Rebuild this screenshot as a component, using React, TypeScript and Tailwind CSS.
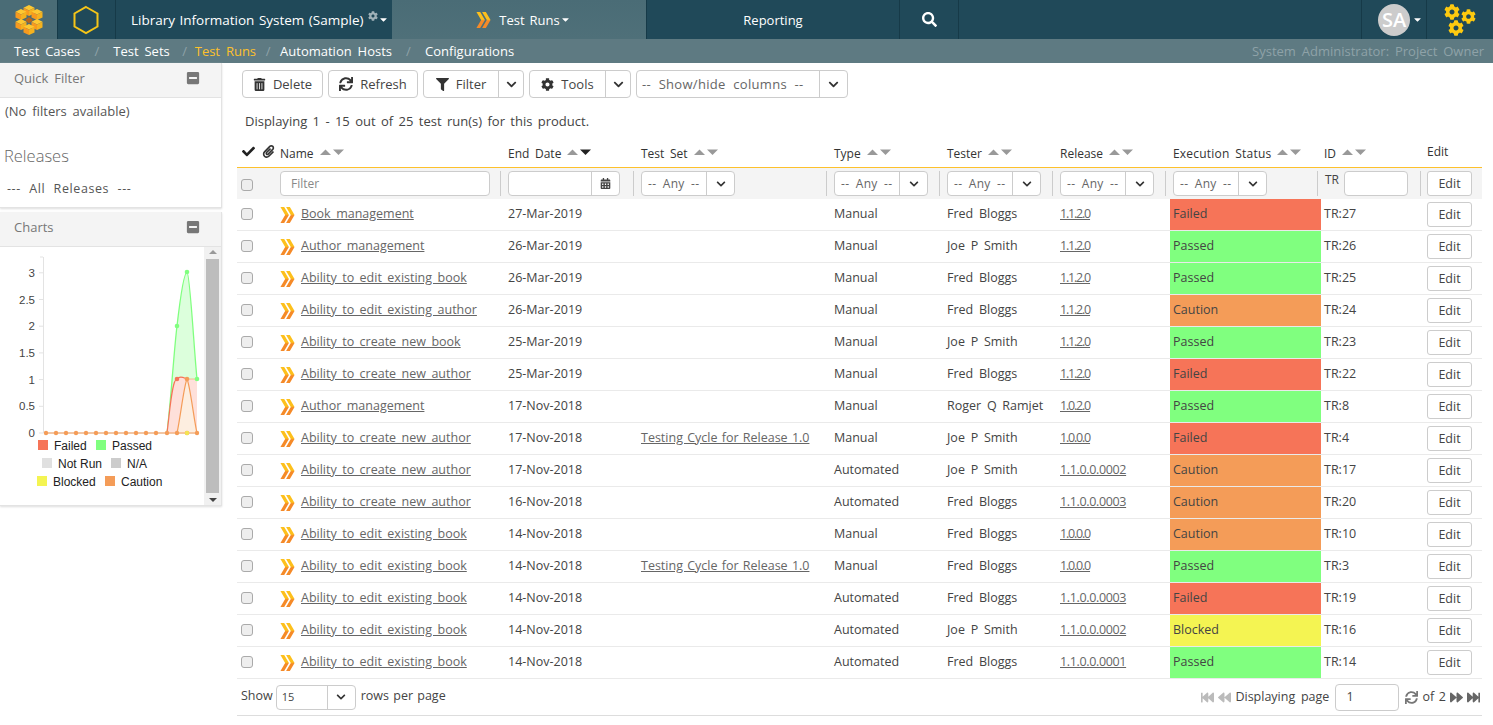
import React from "react";
import { FaTrashAlt, FaSync, FaFilter, FaCog, FaCalendarAlt, FaCheck, FaPaperclip, FaSearch, FaChevronDown, FaFastBackward, FaBackward, FaForward, FaFastForward, FaCaretDown, FaMinusSquare } from "react-icons/fa";

const GRID = "grid grid-cols-[43px_228px_133px_193px_113px_113px_110px_151px_103px_58px]";
const STATUS: Record<string, string> = {
  Failed: "bg-[#f67458]",
  Passed: "bg-[#80ff7f]",
  Caution: "bg-[#f49c58]",
  Blocked: "bg-[#f4f452]",
};
const rows = [
  ["Book management", "27-Mar-2019", "", "Manual", "Fred Bloggs", "1.1.2.0", "Failed", "TR:27"],
  ["Author management", "26-Mar-2019", "", "Manual", "Joe P Smith", "1.1.2.0", "Passed", "TR:26"],
  ["Ability to edit existing book", "26-Mar-2019", "", "Manual", "Fred Bloggs", "1.1.2.0", "Passed", "TR:25"],
  ["Ability to edit existing author", "26-Mar-2019", "", "Manual", "Fred Bloggs", "1.1.2.0", "Caution", "TR:24"],
  ["Ability to create new book", "25-Mar-2019", "", "Manual", "Joe P Smith", "1.1.2.0", "Passed", "TR:23"],
  ["Ability to create new author", "25-Mar-2019", "", "Manual", "Fred Bloggs", "1.1.2.0", "Failed", "TR:22"],
  ["Author management", "17-Nov-2018", "", "Manual", "Roger Q Ramjet", "1.0.2.0", "Passed", "TR:8"],
  ["Ability to create new author", "17-Nov-2018", "Testing Cycle for Release 1.0", "Manual", "Joe P Smith", "1.0.0.0", "Failed", "TR:4"],
  ["Ability to create new author", "17-Nov-2018", "", "Automated", "Joe P Smith", "1.1.0.0.0002", "Caution", "TR:17"],
  ["Ability to create new author", "16-Nov-2018", "", "Automated", "Fred Bloggs", "1.1.0.0.0003", "Caution", "TR:20"],
  ["Ability to edit existing book", "14-Nov-2018", "", "Manual", "Fred Bloggs", "1.0.0.0", "Caution", "TR:10"],
  ["Ability to edit existing book", "14-Nov-2018", "Testing Cycle for Release 1.0", "Manual", "Fred Bloggs", "1.0.0.0", "Passed", "TR:3"],
  ["Ability to edit existing book", "14-Nov-2018", "", "Automated", "Fred Bloggs", "1.1.0.0.0003", "Failed", "TR:19"],
  ["Ability to edit existing book", "14-Nov-2018", "", "Automated", "Joe P Smith", "1.1.0.0.0002", "Blocked", "TR:16"],
  ["Ability to edit existing book", "14-Nov-2018", "", "Automated", "Fred Bloggs", "1.1.0.0.0001", "Passed", "TR:14"],
];

function Sort({ active }: { active?: boolean }) {
  return (
    <svg width="26" height="8" viewBox="0 0 26 8" className="ml-[5px] inline-block align-[2px]">
      <path d="M1 7 L6.5 1.5 L12 7 Z" fill="#999" />
      <path d="M14 1.5 L25 1.5 L19.5 7 Z" fill={active ? "#222" : "#999"} />
    </svg>
  );
}
function Chevrons() {
  return (
    <svg width="15" height="16" viewBox="0 0 15 17" className="shrink-0">
      <defs>
        <linearGradient id="cg" x1="0" y1="0" x2="0" y2="1">
          <stop offset="0.45" stopColor="#fdc01c" />
          <stop offset="0.55" stopColor="#f58a28" />
        </linearGradient>
      </defs>
      <path d="M0 0 H4 L9 8.5 L4 17 H0 L5 8.5 Z" fill="url(#cg)" />
      <path d="M6 0 H10 L15 8.5 L10 17 H6 L11 8.5 Z" fill="url(#cg)" />
    </svg>
  );
}
function Check() {
  return <span className="block h-[12px] w-[12px] rounded-[3px] border border-[#aaa] bg-[#eee]" />;
}
function Btn({ icon, label, caret, w }: { icon?: React.ReactNode; label: string; caret?: boolean; w: string }) {
  return (
    <div className={`flex h-[28px] items-center rounded-[4px] border border-[#ccc] bg-white text-[13px] text-[#444] ${w}`}>
      <span className="flex flex-1 items-center justify-center gap-[7px]">{icon}{label}</span>
      {caret && (
        <span className="flex h-full w-[25px] items-center justify-center border-l border-[#ccc]">
          <FaChevronDown size={11} className="text-[#333]" />
        </span>
      )}
    </div>
  );
}
function Sep() {
  return <span className="ml-auto mr-[7px] h-[25px] w-px shrink-0 bg-[#ccc]" />;
}
function AnySel() {
  return (
    <div className="flex h-[25px] w-[94px] shrink-0 items-center rounded-[4px] border border-[#ccc] bg-white text-[#666]">
      <span className="flex-1 pl-[6px] text-[12px] tracking-[0.3px] [word-spacing:3px]">-- Any --</span>
      <span className="flex h-full w-[28px] items-center justify-center border-l border-[#ccc]">
        <FaChevronDown size={10} className="text-[#333]" />
      </span>
    </div>
  );
}
function Panel({ title, children, className = "" }: { title: string; children?: React.ReactNode; className?: string }) {
  return (
    <div className={className}>
      <div className="flex h-[35px] items-center justify-between border-b border-[#e3e3e3] bg-[#f4f4f4] pb-[4px] pl-[14px] pr-[21px] text-[13px] text-[#777]">
        <span>{title}</span>
        <FaMinusSquare size={14} className="text-[#777]" />
      </div>
      {children}
    </div>
  );
}
function Chart() {
  const X = [46, 56, 66, 76, 86, 96, 106, 116, 126, 136, 146, 156, 167, 177, 187, 197];
  const Y = (v: number) => 433 - v * 53.4;
  const yt = ["0", "0.5", "1", "1.5", "2", "2.5", "3"];
  const leg: [string, number, number, string][] = [
    ["Failed", 38, 440, "#f67458"], ["Passed", 96, 440, "#80ff7f"],
    ["Not Run", 42, 458, "#e0e0e0"], ["N/A", 111, 458, "#cccccc"],
    ["Blocked", 37, 476, "#f4f452"], ["Caution", 105, 476, "#f49c58"],
  ];
  return (
    <svg width="204" height="258" viewBox="0 247 204 258" className="block font-['Liberation_Sans',sans-serif] [word-spacing:0]">
      <path d={`M43.5 257 V433 H197`} fill="none" stroke="#e3e3e3" />
      <path d="M40 257 H43" stroke="#e3e3e3" />
      {yt.map((t, i) => (
        <g key={t}>
          <path d={`M39 ${Y(i / 2)} H43`} stroke="#e3e3e3" />
          <text x="35" y={Y(i / 2) + 4} textAnchor="end" fontSize="11.5" fill="#444">{t}</text>
        </g>
      ))}
      <path d="M167 433 C171 400 174 350 177 326 C180 300 184 273 187 272 C190 273 194 350 197 379 V433 Z" fill="#dcffdc" />
      <path d="M167 433 C171 400 174 350 177 326 C180 300 184 273 187 272 C190 273 194 350 197 379" fill="none" stroke="#80ff7f" strokeWidth="1.3" />
      <path d="M167 433 C170 410 172 379 177 379 C180 375 184 378 187 379 H197 V433 Z" fill="#fee0da" />
      <path d="M167 433 C170 410 172 379 177 379 C180 375 184 378 187 379" fill="none" stroke="#f67458" strokeWidth="1.2" />
      <path d="M177 433 C180 420 184 385 187 379 C190 385 194 420 197 433 Z" fill="#fdeee0" />
      <path d="M177 433 C180 420 184 385 187 379 C190 385 194 420 197 433" fill="none" stroke="#f49c58" strokeWidth="1.2" />
      <path d="M187 379 H197" stroke="#f49c58" strokeOpacity="0.6" />
      <path d="M46 433 H197" stroke="#f49c58" strokeWidth="1.2" />
      {X.map((x) => <circle key={x} cx={x} cy={433} r="2.2" fill="#f49c58" />)}
      <circle cx="187" cy="433" r="2.2" fill="#f4e452" />
      <circle cx="177" cy={326} r="2.3" fill="#80ff7f" />
      <circle cx="187" cy={272} r="2.3" fill="#80ff7f" />
      <circle cx="197" cy={379} r="2.3" fill="#80ff7f" />
      <circle cx="177" cy={379} r="2.3" fill="#f67458" />
      <circle cx="187" cy={379} r="2.3" fill="#f49c58" />
      {leg.map(([t, x, y, c]) => (
        <g key={t}>
          <rect x={x} y={y} width="10" height="10" fill={c} />
          <text x={x + 16} y={y + 10} fontSize="12" fill="#222">{t}</text>
        </g>
      ))}
    </svg>
  );
}
function Logo() {
  const cube = (x: number, y: number, k: number) => (
    <g key={k} transform={`translate(${x} ${y})`}>
      <path d="M0 -5 L5.5 -2.2 L0 0.6 L-5.5 -2.2 Z" fill="#fdc832" />
      <path d="M-5.5 -2.2 L0 0.6 V6 L-5.5 3.4 Z" fill="#f79a1f" />
      <path d="M5.5 -2.2 L0 0.6 V6 L5.5 3.4 Z" fill="#f5b21e" />
    </g>
  );
  return (
    <svg width="30" height="36" viewBox="0 0 30 36">
      {[[15, 8], [7, 12], [23, 12], [7, 22], [23, 22], [15, 27]].map(([x, y], i) => cube(x, y, i))}
      <path d="M15 15 L19 18 L15 21.5 L11 18 Z" fill="#b5651d" />
    </svg>
  );
}
export default function App() {
  return (
    <div className="flex h-[725px] w-[1493px] flex-col overflow-hidden bg-white font-['Open_Sans',sans-serif] text-[12.5px] leading-[18px] text-[#444] [word-spacing:2.5px]">
      <header className="flex h-[39px] shrink-0 items-stretch bg-[#204959] text-[13px] text-white">
        <div className="flex w-[58px] items-center justify-center border-r border-[#163a48] bg-[#4a6c76]"><Logo /></div>
        <div className="flex w-[58px] items-center justify-center border-r border-[#163a48] pr-[2px]">
          <svg width="26" height="30" viewBox="0 0 26 30"><path d="M13 2 L24.5 8.5 V21.5 L13 28 L1.5 21.5 V8.5 Z" fill="none" stroke="#f5c518" strokeWidth="2" /></svg>
        </div>
        <div className="flex w-[276px] items-center whitespace-nowrap pl-[15px] text-[13.5px] [word-spacing:1px]">
          Library Information System (Sample)
          <FaCog size={10} className="mb-[8px] ml-[4px] text-[#9fb1b8]" />
          <FaCaretDown size={11} className="text-white" />
        </div>
        <div className="flex w-[255px] items-center justify-center gap-[8px] border-r border-[#163a48] bg-gradient-to-b from-[#4a6c76] to-[#4f7079] pl-[9px] [word-spacing:1.5px]">
          <Chevrons />
          <span className="flex items-center">Test Runs<FaCaretDown size={11} /></span>
        </div>
        <div className="flex w-[253px] items-center justify-center border-r border-[#163a48]">Reporting</div>
        <div className="flex w-[59px] items-center justify-center border-r border-[#163a48]"><FaSearch size={15} /></div>
        <div className="flex-1" />
        <div className="flex w-[66px] items-center border-x border-[#163a48] pl-[16px]">
          <span className="flex h-[32px] w-[32px] shrink-0 items-center justify-center rounded-full bg-[#cccccc] text-[20px] font-semibold">SA</span>
          <FaCaretDown size={11} className="ml-[2px] shrink-0" />
        </div>
        <div className="flex w-[66px] items-center justify-center">
          <svg width="34" height="34" viewBox="0 0 34 34" className="text-[#fdc90f]">
            <FaCog x="1" y="1" size={16} />
            <FaCog x="18" y="6" size={15} />
            <FaCog x="5" y="17" size={16} />
          </svg>
        </div>
      </header>
      <nav className="flex h-[24px] shrink-0 items-center bg-[#5e7a82] pl-[14px] pr-[9px] text-[13px] text-[#fff]">
        <span>Test Cases</span><span className="w-[33px] text-center text-[#8ea2a8]">/</span>
        <span>Test Sets</span><span className="w-[25px] pl-[5px] text-center text-[#8ea2a8]">/</span>
        <span className="text-[#fdc12c]">Test Runs</span><span className="w-[24px] text-center text-[#8ea2a8]">/</span>
        <span>Automation Hosts</span><span className="w-[33px] text-center text-[#8ea2a8]">/</span>
        <span>Configurations</span>
        <span className="ml-auto text-[#8ea2a8]">System Administrator: Project Owner</span>
      </nav>
      <div className="flex min-h-0 flex-1">
        <aside className="w-[222px] shrink-0">
          <Panel title="Quick Filter" className="h-[145px] border-b border-r border-[#e3e3e3] shadow-[0_1px_2px_#ddd]">
            <div className="px-[5px] pt-[4px] text-[13px] text-[#555]">(No filters available)</div>
            <div className="mt-[24px] pl-[4px] text-[16.5px] font-light leading-[24px] text-[#666]">Releases</div>
            <div className="mt-[12px] pl-[7px] tracking-[0.6px] text-[#555] [word-spacing:4.5px]">--- All Releases ---</div>
          </Panel>
          <Panel title="Charts" className="mt-[4px] border-b border-r border-[#e3e3e3] shadow-[0_1px_2px_#ddd]">
            <div className="flex h-[258px]">
              <Chart />
              <div className="flex w-[17px] flex-col items-center bg-[#f1f1f1] py-[3px]">
                <span className="h-0 w-0 border-x-[4px] border-b-[4px] border-x-transparent border-b-[#999]" />
                <span className="my-[5px] w-[13px] flex-1 bg-[#bdbdbd]" />
                <span className="h-0 w-0 border-x-[4px] border-t-[4px] border-x-transparent border-t-[#444]" />
              </div>
            </div>
          </Panel>
        </aside>
        <main className="min-w-0 flex-1 pl-[15px] pr-[11px]">
          <div className="flex gap-[5px] pl-[5px] pt-[7px]">
            <Btn w="w-[81px]" icon={<FaTrashAlt size={13} className="text-[#333]" />} label="Delete" />
            <Btn w="w-[90px]" icon={<FaSync size={14} className="text-[#333]" />} label="Refresh" />
            <Btn w="w-[101px]" icon={<FaFilter size={13} className="text-[#333]" />} label="Filter" caret />
            <Btn w="w-[102px]" icon={<FaCog size={13} className="text-[#333]" />} label="Tools" caret />
            <div className="flex h-[28px] w-[212px] items-center rounded-[4px] border border-[#ccc] text-[13px] text-[#666]">
              <span className="flex-1 pl-[5px] tracking-[0.3px] [word-spacing:4px]">-- Show/hide columns --</span>
              <span className="flex h-full w-[28px] items-center justify-center border-l border-[#ccc]"><FaChevronDown size={11} className="text-[#333]" /></span>
            </div>
          </div>
          <div className="pl-[8px] pt-[14px] text-[13px] [word-spacing:2px]">Displaying 1 - 15 out of 25 test run(s) for this product.</div>
          <div className={`${GRID} mt-[10px] h-[28px] items-center border-b border-[#fdc12c] text-[12px] text-[#333]`}>
            <div className="flex items-center gap-[7px] pb-[4px] pl-[5px]"><FaCheck size={13} className="text-[#222]" /><FaPaperclip size={13} className="text-[#333]" /></div>
            <div>Name<Sort /></div>
            <div>End Date<Sort active /></div>
            <div>Test Set<Sort /></div>
            <div>Type<Sort /></div>
            <div>Tester<Sort /></div>
            <div>Release<Sort /></div>
            <div className="pl-[3px] tracking-[0.2px]">Execution Status<Sort /></div>
            <div className="pl-[3px]">ID<Sort /></div>
            <div className="pb-[4px] pl-[3px]">Edit</div>
          </div>
          <div className={`${GRID} h-[31px] items-center bg-[#f4f4f4]`}>
            <div className="pl-[4px] pt-[2px]"><Check /></div>
            <div className="flex items-center">
              <div className="flex h-[25px] w-[210px] items-center rounded-[4px] border border-[#ccc] bg-white pl-[10px] text-[12px] text-[#888]">Filter</div>
              <Sep />
            </div>
            <div className="flex items-center">
              <div className="flex h-[25px] w-[112px] justify-end rounded-[4px] border border-[#ccc] bg-white">
                <span className="flex w-[28px] items-center justify-center border-l border-[#ccc]"><FaCalendarAlt size={11} className="text-[#444]" /></span>
              </div>
              <Sep />
            </div>
            <div className="flex items-center"><AnySel /><Sep /></div>
            <div className="flex items-center"><AnySel /><Sep /></div>
            <div className="flex items-center"><AnySel /><Sep /></div>
            <div className="flex items-center"><AnySel /><span className="ml-auto mr-[4px] h-[25px] w-px bg-[#ccc]" /></div>
            <div className="flex items-center pl-[3px]"><AnySel /><span className="ml-auto mr-[3px] h-[25px] w-px bg-[#ccc]" /></div>
            <div className="flex items-start pl-[4px] text-[12px] font-medium">TR<span className="ml-[5px] h-[25px] w-[64px] shrink-0 rounded-[4px] border border-[#ccc] bg-white" /><span className="ml-auto mr-[3px] h-[25px] w-px shrink-0 bg-[#ccc]" /></div>
            <div className="pl-[3px]"><span className="flex h-[25px] w-[45px] items-center justify-center rounded-[3px] border border-[#ccc] bg-white">Edit</span></div>
          </div>
          {rows.map((r, i) => {
            const rel = r[5].length > 7 ? "tracking-[-0.35px]" : "tracking-[-1.2px]";
            return (
              <div key={i} className={`${GRID} h-[32px] items-center border-b border-[#eaeaea]`}>
                <div className="pb-[2px] pl-[4px]"><Check /></div>
                <div className="flex items-center gap-[6px]"><Chevrons /><span className="pb-[2px] text-[#666] underline [word-spacing:2.2px]">{r[0]}</span></div>
                <div className="pb-[2px]">{r[1]}</div>
                <div className="pb-[2px] text-[#666] underline [word-spacing:1px]">{r[2]}</div>
                <div className="pb-[2px]">{r[3]}</div>
                <div className="pb-[2px]">{r[4]}</div>
                <div className={`pb-[2px] text-[#666] underline ${rel}`}>{r[5]}</div>
                <div className={`flex h-full items-center pb-[2px] pl-[3px] ${STATUS[r[6]]}`}>{r[6]}</div>
                <div className="pb-[2px] pl-[3px]">{r[7]}</div>
                <div className="pl-[3px]"><span className="flex h-[25px] w-[45px] items-center justify-center rounded-[3px] border border-[#ccc]">Edit</span></div>
              </div>
            );
          })}
          <div className="flex h-[37px] items-center border-b border-[#ddd] pl-[4px] text-[#444]">
            <span className="pb-[2px]">Show</span>
            <div className="ml-[3px] mr-[5px] flex h-[25px] w-[80px] items-center rounded-[4px] border border-[#ccc] pl-[5px] text-[11px]">
              <span className="flex-1">15</span>
              <span className="flex h-full w-[28px] items-center justify-center border-l border-[#ccc]"><FaChevronDown size={10} className="text-[#333]" /></span>
            </div>
            <span className="pb-[2px] [word-spacing:1px]">rows per page</span>
            <div className="ml-auto flex items-center gap-[4px] pr-[2px]">
              <FaFastBackward size={13} className="text-[#bbb]" />
              <FaBackward size={13} className="text-[#bbb]" />
              <span>Displaying page</span>
              <span className="mx-[2px] flex h-[27px] w-[64px] items-center rounded-[4px] border border-[#ccc] pl-[10px]">1</span>
              <FaSync size={13} className="text-[#777]" />
              <span className="[word-spacing:1.5px]">of 2</span>
              <FaForward size={13} className="text-[#666]" />
              <FaFastForward size={13} className="text-[#666]" />
            </div>
          </div>
        </main>
      </div>
    </div>
  );
}
